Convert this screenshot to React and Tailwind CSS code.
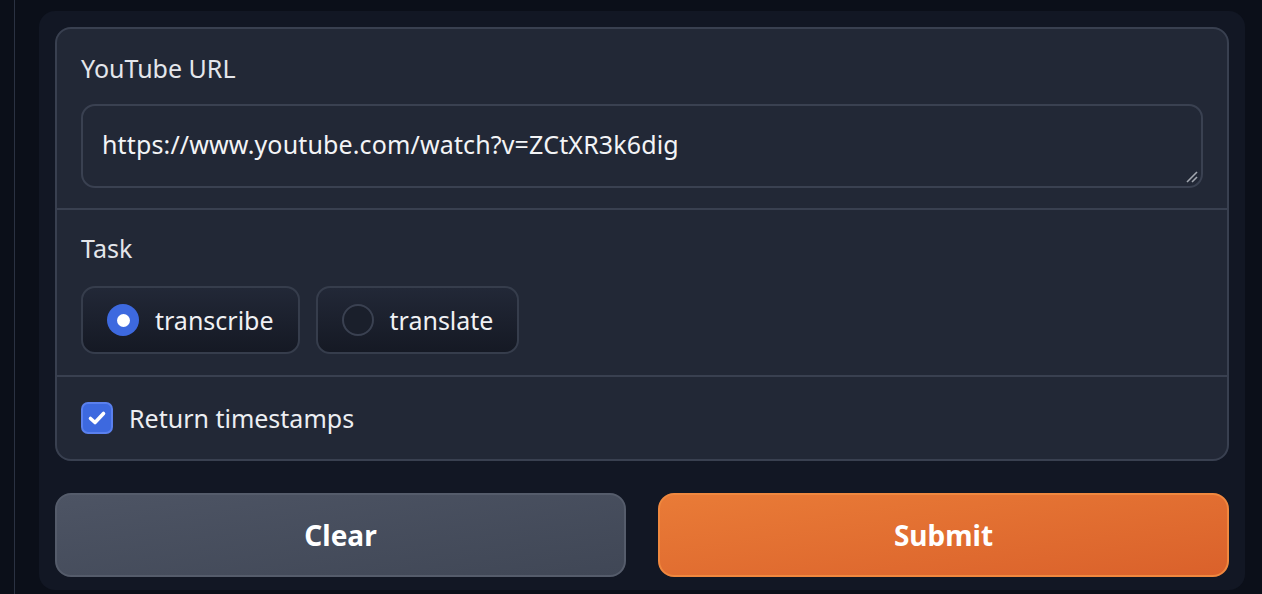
export default function App() {
  const font = { fontFamily: '"Noto Sans", "Open Sans", sans-serif' };
  return (
    <div className="w-[1262px] h-[594px] bg-[#0b0f19] flex overflow-hidden" style={font}>
      <div className="w-[14px] shrink-0" />
      <div className="w-px bg-[#2b3242] shrink-0" />
      <div className="w-[24px] shrink-0" />
      <div className="mt-[11px] w-[1206px] h-[579px] bg-[#121724] rounded-[16px] px-[16px] pt-[16px]">
        <div className="border-2 border-[#394050] rounded-[16px] bg-[#222836] flex flex-col">
          {/* Section 1 */}
          <div className="pt-[22px] px-[24px] pb-[20px]">
            <div className="h-[34px] leading-[34px] text-[25px] text-[#e4e6eb]">YouTube URL</div>
            <div className="mt-[19px] h-[84px] relative border-2 border-[#3a4151] rounded-[14px] pl-[19px] pt-[21px]">
              <div className="h-[34px] leading-[34px] text-[25px] tracking-[0.14px] text-[#f3f4f6]">
                https://www.youtube.com/watch?v=ZCtXR3k6dig
              </div>
              <svg className="absolute right-[2px] bottom-[2px]" width="14" height="14" viewBox="0 0 14 14">
                <line x1="2" y1="12" x2="12" y2="2" stroke="#a3a7b0" strokeWidth="1.6" />
                <line x1="7" y1="12" x2="12" y2="7" stroke="#a3a7b0" strokeWidth="1.6" />
              </svg>
            </div>
          </div>
          {/* Section 2 */}
          <div className="border-t-2 border-[#394050] pt-[21px] px-[24px] pb-[21px]">
            <div className="h-[34px] leading-[34px] text-[25px] text-[#e4e6eb]">Task</div>
            <div className="mt-[21px] flex gap-[16px]">
              <div className="h-[68px] flex items-center gap-[16px] pl-[24px] pr-[24px] border-2 border-[#363d4c] rounded-[14px] bg-gradient-to-b from-[#222837] to-[#151924]">
                <div className="w-[32px] h-[32px] rounded-full bg-[#3d69df] flex items-center justify-center">
                  <div className="w-[13px] h-[13px] rounded-full bg-white" />
                </div>
                <span className="leading-[34px] text-[25px] text-[#f0f1f4]">transcribe</span>
              </div>
              <div className="h-[68px] flex items-center gap-[16px] pl-[24px] pr-[24px] border-2 border-[#363d4c] rounded-[14px] bg-gradient-to-b from-[#222837] to-[#151924]">
                <div className="w-[32px] h-[32px] rounded-full border-2 border-[#3a4151] bg-[#1a1f2b]" />
                <span className="leading-[34px] text-[25px] text-[#f0f1f4]">translate</span>
              </div>
            </div>
          </div>
          {/* Section 3 */}
          <div className="border-t-2 border-[#394050] pt-[24px] px-[24px] pb-[24px]">
            <div className="h-[34px] flex items-center gap-[16px]">
              <div className="w-[32px] h-[32px] rounded-[7px] bg-[#3d69df] border-2 border-[#5a80ee] flex items-center justify-center">
                <svg width="22" height="22" viewBox="0 0 22 22">
                  <path d="M4.5 11.5 L9 15.5 L17.5 6.5" fill="none" stroke="white" strokeWidth="3.6" strokeLinecap="round" strokeLinejoin="round" />
                </svg>
              </div>
              <span className="leading-[34px] text-[25px] text-[#eceef2]">Return timestamps</span>
            </div>
          </div>
        </div>
        <div className="mt-[32px] grid grid-cols-2 gap-[32px]">
          <div className="h-[84px] rounded-[16px] border-2 border-[#555c6b] bg-gradient-to-br from-[#4d5464] to-[#404756] flex items-center justify-center text-[28px] font-bold text-white">
            Clear
          </div>
          <div className="h-[84px] rounded-[16px] border-2 border-[#f0883f] bg-gradient-to-br from-[#e97b37] to-[#da612b] flex items-center justify-center text-[28px] font-bold text-white">
            Submit
          </div>
        </div>
      </div>
      <div className="flex-1" />
    </div>
  );
}
